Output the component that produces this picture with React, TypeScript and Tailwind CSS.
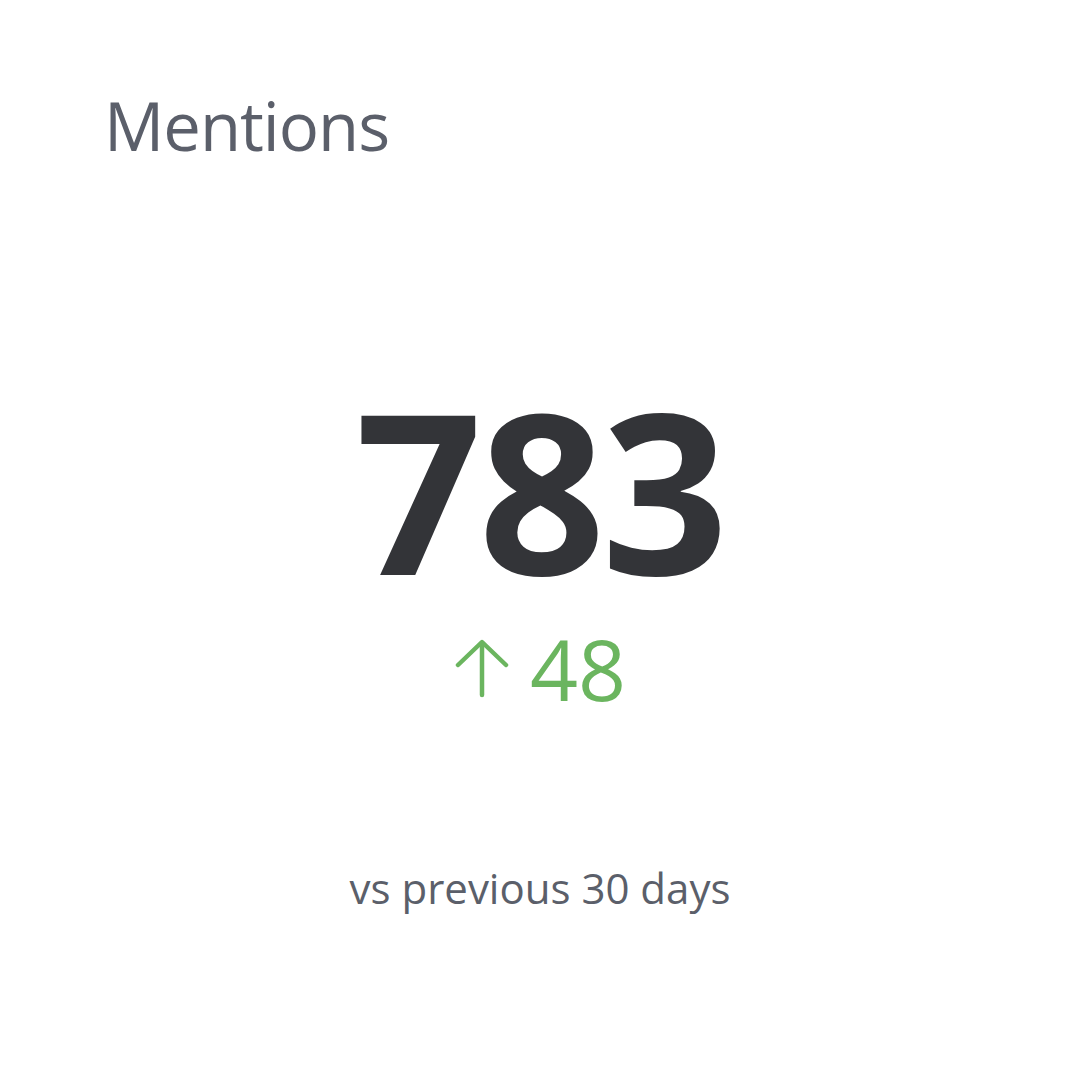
import React from 'react';

export default function App() {
  return (
    <div className="h-[1080px] w-[1080px] bg-white font-['Open_Sans',sans-serif]">
      <div className="pt-[92px] pl-[104px]">
        <h2 className="text-[67px] leading-none font-normal tracking-[-1px] text-[#5b5f6a]">Mentions</h2>
      </div>

      <div className="flex flex-col items-center">
        <div className="mt-[219px] text-[222px] leading-none font-bold tracking-[-4px] text-[#333438]">783</div>

        <div className="mt-[27px] flex items-center gap-[20px] text-[#6bb55f]">
          <svg width="56" height="60" viewBox="0 0 56 60" fill="none" stroke="currentColor" strokeWidth="4.5" strokeLinecap="round" strokeLinejoin="round">
            <path d="M28 56V4" />
            <path d="M4 26L28 3L52 26" />
          </svg>
          <span className="text-[84px] leading-none font-normal">48</span>
        </div>

        <div className="mt-[156px] text-[42px] leading-none text-[#5b5f6a]">vs previous 30 days</div>
      </div>
    </div>
  );
}
